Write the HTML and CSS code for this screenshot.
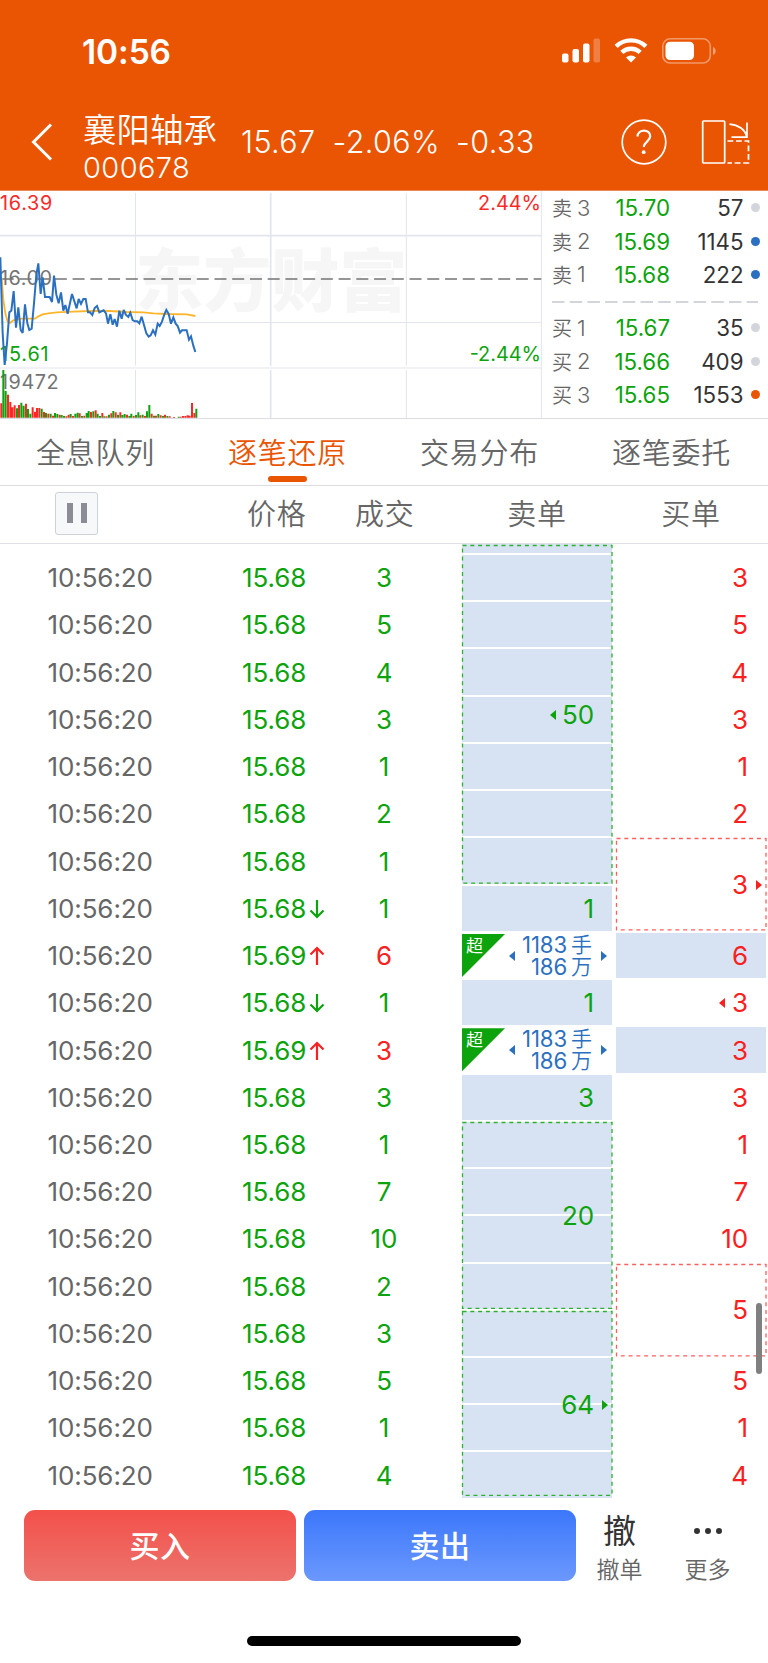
FILE: index.html
```html
<!DOCTYPE html>
<html lang="zh-CN">
<head>
<meta charset="utf-8">
<title>襄阳轴承 000678</title>
<link rel="stylesheet" href="styles.css">
</head>
<body>
<header class="top">
  <div class="status">
    <span class="clock">10:56</span>
    <div class="status-icons">
      <svg width="40" height="26" viewBox="0 0 40 26" fill="#fff"><rect x="1" y="15.5" width="6.5" height="9" rx="2"/><rect x="11.5" y="11" width="6.5" height="13.5" rx="2"/><rect x="22" y="5.5" width="6.5" height="19" rx="2"/><rect x="32.5" y="0.5" width="6.5" height="24" rx="2" opacity=".25"/></svg>
      <svg class="wifi" width="34" height="26" viewBox="0 0 34 26" fill="none" stroke="#fff" stroke-width="4.4"><path d="M2.1 8.4a21.5 21.5 0 0 1 29.8 0"/><path d="M7.8 14.4a13.3 13.3 0 0 1 18.4 0"/><path d="M17 24.6l-5-5.2a7.2 7.2 0 0 1 10 0z" fill="#fff" stroke="none"/></svg>
      <svg class="battery" width="55" height="26" viewBox="0 0 55 26"><rect x=".8" y=".8" width="47.5" height="24.2" rx="7.4" fill="none" stroke="#fff" stroke-opacity=".4" stroke-width="1.6"/><rect x="3.5" y="3.8" width="28.5" height="18.2" rx="4.5" fill="#fff"/><path d="M51 9c3.6 1.500 3.600 6.500 0 8z" fill="#fff" fill-opacity=".45"/></svg>
    </div>
  </div>
  <div class="nav">
    <svg class="back" width="22" height="38" viewBox="0 0 22 38" fill="none" stroke="#fff" stroke-width="3"><path d="M20 1.500L2.500 19 20 36.500"/></svg>
    <div class="stock"><div class="name">襄阳轴承</div><div class="code">000678</div></div>
    <div class="quote"><span class="q1">15.67</span><span class="q2">-2.06%</span><span class="q3">-0.33</span></div>
    <svg class="help" width="46" height="46" viewBox="0 0 46 46" fill="none" stroke="#fff" stroke-width="1.700"><circle cx="23" cy="23" r="21.800"/><path stroke-width="2.200" d="M16.500 17.500c.3-8 12.700-7.800 12.700-.3 0 5.300-6.400 5.500-6.400 10.800"/><circle cx="22.700" cy="33.200" r="1.900" fill="#fff" stroke="none"/></svg>
    <svg class="rotate" width="50" height="46" viewBox="0 0 50 46" fill="none" stroke="#fff" stroke-width="1.700"><rect x="1.700" y="2" width="22" height="42" rx="1"/><path d="M28.500 5.200c9 .8 15.800 5.500 17 12M46 3.500V18.200H30.500"/><path stroke-dasharray="5.800 2.700" d="M26.500 22H47.500V44H26.500"/></svg>
  </div>
</header>

<section class="market">
  <svg class="chart" width="543" height="228" viewBox="0 3 1629 684" fill="none">
    <text class="watermark" x="406" y="348" textLength="816">东方财富</text>
    <g stroke="#e3e5ee">
      <path stroke-width="5" d="M0 137H1624M812 9V527M812 540V684"/>
      <path stroke-width="3" d="M0 397.500H1624M0 534H1624M406.500 9V527M406.500 540V684M1219 9V527M1219 540V684M1624 3V684"/>
    </g>
    <path stroke="#747474" stroke-width="4" stroke-dasharray="36 17.200" d="M5 267H1624"/>
    <text class="t gray" x="0" y="286" textLength="156">16.00</text>
    <text class="t red" x="0" y="60" textLength="157">16.39</text>
    <text class="t green" x="0" y="513" textLength="146">15.61</text>
    <text class="t gray" x="0" y="598" textLength="176">19472</text>
    <text class="t red" x="1623" y="60" text-anchor="end">2.44%</text>
    <text class="t green" x="1623" y="513" text-anchor="end">-2.44%</text>
    <path stroke="#ffb52b" stroke-width="5.500" d="M5 265L10 330 16 370 22 392 30 399 40 391 50 388 65 386 85 386 105 386 115 379 128 373 145 370 170 367 220 365 270 363 330 363 380 366 430 367 460 370 500 372 560 373 586 378"/>
    <path stroke="#2b70c0" stroke-width="6" stroke-linejoin="miter" stroke-miterlimit="3" d="M1 202L8 430 14 525 21 460 28 367 34 362 41 303 48 413 55 352 62 420 68 429 75 343 82 400 88 420 95 416 102 340 109 255 115 220 122 312 128 262 135 321 149 321 156 336 162 257 169 314 176 340 183 307 190 362 196 345 203 371 216 312 230 355 236 327 243 342 250 327 257 327 264 367 270 367 277 375 284 354 291 348 298 367 311 361 318 370 324 401 331 373 338 404 344 387 351 410 358 362 365 386 371 360 378 375 385 381 391 368 398 390 405 394 412 394 418 400 425 380 432 405 439 430 446 440 452 436 459 421 466 434 473 401 479 408 486 395 493 373 499 360 506 372 513 401 520 382 527 401 533 408 540 428 546 421 560 421 567 449 573 439 580 467 586 486"/>
    <path stroke="#ff2626" stroke-width="6" d="M4 683V640M24 683V614M31 683V636M37 683V652M44 683V646M57 683V645M78 683V641M98 683V652M105 683V665M111 683V654M118 683V654M132 683V666M145 683V671M159 683V677M179 683V674M199 683V679M206 683V674M219 683V678M239 683V670M253 683V677M273 683V666M287 683V661M307 683V669M320 683V679M334 683V670M347 683V667M361 683V667M381 683V674M401 683V678M421 683V676M435 683V678M455 683V671M468 683V677M482 683V676M495 683V674M509 683V679M522 683V681M542 683V680M549 683V678M556 683V678M563 683V676M569 683V677M576 683V639M583 683V669"/>
    <path stroke="#0ca30c" stroke-width="6" d="M10 683V540M17 683V603M51 683V655M64 683V638M71 683V647M84 683V657M91 683V671M125 683V656M138 683V669M152 683V671M165 683V669M172 683V672M185 683V675M192 683V678M212 683V672M226 683V671M233 683V668M246 683V678M260 683V669M266 683V663M280 683V664M293 683V671M300 683V678M313 683V679M327 683V674M340 683V663M354 683V674M367 683V675M374 683V672M388 683V678M394 683V671M408 683V675M415 683V667M428 683V674M441 683V664M448 683V645M462 683V677M475 683V672M489 683V678M502 683V678M536 683V680M589 683V656"/>
  </svg>
  <div class="depth">
    <div class="level"><span class="side">卖<i>3</i></span><b>15.70</b><em>57</em><u></u></div>
    <div class="level"><span class="side">卖<i>2</i></span><b>15.69</b><em>1145</em><u class="blue"></u></div>
    <div class="level"><span class="side">卖<i>1</i></span><b>15.68</b><em>222</em><u class="blue"></u></div>
    <svg class="split" width="206" height="20" viewBox="0 0 206 20"><path d="M0 11H206" stroke="#d2d5db" stroke-width="2" stroke-dasharray="12.500 5.200"/></svg>
    <div class="level"><span class="side">买<i>1</i></span><b>15.67</b><em>35</em><u></u></div>
    <div class="level"><span class="side">买<i>2</i></span><b>15.66</b><em>409</em><u></u></div>
    <div class="level"><span class="side">买<i>3</i></span><b>15.65</b><em>1553</em><u class="orange"></u></div>
  </div>
</section>

<nav class="tabs"><span>全息队列</span><span class="active">逐笔还原</span><span>交易分布</span><span>逐笔委托</span></nav>

<div class="cols head">
  <span class="pause"><i></i><i></i></span>
  <span class="h-price">价格</span><span class="h-mid">成交</span><span class="h-mid h-sell">卖单</span><span class="h-mid h-buy">买单</span>
</div>

<main class="cols body">
  <div class="col time"><p>10:56:20</p><p>10:56:20</p><p>10:56:20</p><p>10:56:20</p><p>10:56:20</p><p>10:56:20</p><p>10:56:20</p><p>10:56:20</p><p>10:56:20</p><p>10:56:20</p><p>10:56:20</p><p>10:56:20</p><p>10:56:20</p><p>10:56:20</p><p>10:56:20</p><p>10:56:20</p><p>10:56:20</p><p>10:56:20</p><p>10:56:20</p><p>10:56:20</p></div>
  <div class="col price">
    <p>15.68</p><p>15.68</p><p>15.68</p><p>15.68</p><p>15.68</p><p>15.68</p><p>15.68</p>
    <p>15.68<svg class="arrow" viewBox="0 0 16 20"><path d="M8 1V18M1.500 11.500L8 18l6.500-6.500"/></svg></p>
    <p>15.69<svg class="arrow up" viewBox="0 0 16 20"><path d="M8 19V2M1.500 8.500L8 2l6.500 6.500"/></svg></p>
    <p>15.68<svg class="arrow" viewBox="0 0 16 20"><path d="M8 1V18M1.500 11.500L8 18l6.500-6.500"/></svg></p>
    <p>15.69<svg class="arrow up" viewBox="0 0 16 20"><path d="M8 19V2M1.500 8.500L8 2l6.500 6.500"/></svg></p>
    <p>15.68</p><p>15.68</p><p>15.68</p><p>15.68</p><p>15.68</p><p>15.68</p><p>15.68</p><p>15.68</p><p>15.68</p>
  </div>
  <div class="col vol"><p>3</p><p>5</p><p>4</p><p>3</p><p>1</p><p>2</p><p>1</p><p>1</p><p class="red">6</p><p>1</p><p class="red">3</p><p>3</p><p>1</p><p>7</p><p>10</p><p>2</p><p>3</p><p>5</p><p>1</p><p>4</p></div>
  <div class="col sell">
    <div class="group first"><div class="stub"></div><div class="cell"></div><div class="cell"></div><div class="cell"></div><div class="cell"></div><div class="cell"></div><div class="cell"></div><div class="cell"></div><svg class="dash"><rect/></svg><span class="sum"><svg class="tri" viewBox="0 0 6 10"><path d="M6 0V10L0 5z"/></svg>50</span></div>
    <div class="cell">1</div>
    <div class="cell super"><span class="corner">超</span><svg class="tri" viewBox="0 0 6 10"><path d="M6 0V10L0 5z"/></svg><span class="big"><span>1183<s>手</s></span><span>186<s>万</s></span></span><svg class="tri" viewBox="0 0 6 10"><path d="M0 0V10L6 5z"/></svg></div>
    <div class="cell">1</div>
    <div class="cell super"><span class="corner">超</span><svg class="tri" viewBox="0 0 6 10"><path d="M6 0V10L0 5z"/></svg><span class="big"><span>1183<s>手</s></span><span>186<s>万</s></span></span><svg class="tri" viewBox="0 0 6 10"><path d="M0 0V10L6 5z"/></svg></div>
    <div class="cell">3</div>
    <div class="group"><div class="cell"></div><div class="cell"></div><div class="cell"></div><div class="cell"></div><svg class="dash"><rect/></svg><span class="sum">20</span></div>
    <div class="group"><div class="cell"></div><div class="cell"></div><div class="cell"></div><div class="cell"></div><svg class="dash last"><rect/></svg><span class="sum">64<svg class="tri after" viewBox="0 0 6 10"><path d="M0 0V10L6 5z"/></svg></span></div>
  </div>
  <div class="col buy">
    <p>3</p><p>5</p><p>4</p><p>3</p><p>1</p><p>2</p>
    <div class="group pair"><svg class="dash"><rect/></svg><span class="sum">3<svg class="tri after" viewBox="0 0 6 10"><path d="M0 0V10L6 5z"/></svg></span></div>
    <div class="cell">6</div>
    <p><svg class="tri before" viewBox="0 0 6 10"><path d="M6 0V10L0 5z"/></svg>3</p>
    <div class="cell">3</div>
    <p>3</p><p>1</p><p>7</p><p>10</p>
    <div class="group pair"><svg class="dash"><rect/></svg><span class="sum">5</span></div>
    <p>5</p><p>1</p><p>4</p>
  </div>
  <div class="scrollbar"></div>
</main>

<footer class="actions">
  <div class="btn btn-buy">买入</div>
  <div class="btn btn-sell">卖出</div>
  <div class="act"><span class="act-icon">撤</span><span>撤单</span></div>
  <div class="act more"><span class="act-icon"><svg width="30" height="8" viewBox="0 0 30 8" fill="#333"><circle cx="4" cy="4" r="3"/><circle cx="15" cy="4" r="3"/><circle cx="26" cy="4" r="3"/></svg></span><span>更多</span></div>
</footer>
<div class="home"></div>
</body>
</html>
```
FILE: styles.css
```css
* { box-sizing: border-box; margin: 0; padding: 0; }
body {
  width: 768px;
  height: 1663px;
  overflow: hidden;
  background: #fff;
  color: #666;
  font-family: Inter, "Noto Sans CJK SC", sans-serif;
}
svg { display: block; flex: none; }

/* header */
.top { height: 191px; background: #ea5504; color: #fff; border-bottom: 1px solid #e98a5a; }
.status { height: 96px; padding: 32px 51px 0 82px; display: flex; justify-content: space-between; }
.clock { font-size: 33.5px; line-height: 40px; font-weight: 600; letter-spacing: -.1px; }
.status-icons { display: flex; padding: 6px 0 0; }
.wifi { margin-left: 13px; }
.battery { margin-left: 14px; }
.nav { height: 91px; display: flex; align-items: center; padding: 0 17px 0 31px; }
.stock { width: 158px; margin-left: 30px; }
.name { font-size: 33.5px; line-height: 40px; font-weight: 350; white-space: nowrap; margin-top: 12px; }
.code { font-size: 29px; line-height: 36px; font-weight: 350; letter-spacing: .4px; }
.quote { flex: 1; display: flex; font-size: 30.5px; font-weight: 350; letter-spacing: .4px; }
.q2 { margin-left: 17px; }
.q3 { margin-left: 16px; }
.help { margin-right: 34px; }

/* chart and order book */
.market { height: 228px; display: flex; border-bottom: 1px solid #dcdde4; }
.chart { height: 228px; }
.watermark { font: 900 204px "Noto Sans CJK SC", sans-serif; fill: #f6f6f6; }
.t { font-size: 59.500px; }
.gray { fill: #747474; }
.t.red { fill: #fa2a2a; }
.t.green { fill: #0ca30c; }
.depth { flex: 1; padding: 0 7px 0 9px; }
.level { height: 33.4px; display: grid; grid-template-columns: 50px 68px 73.500px 1fr; align-items: center; font-size: 22.300px; }
.level b, .level em { font-weight: 400; font-style: normal; text-align: right; color: #0ca30c; }
.level em { color: #333; }
.side { display: flex; gap: 5px; align-items: center; font-size: 20px; font-weight: 350; }
.side i { font-style: normal; font-size: 22px; }
.level u { width: 9px; height: 9px; border-radius: 50%; background: #d2d5db; justify-self: center; margin-left: 7px; }
.level u.blue { background: #2b70c0; }
.level u.orange { background: #ea5504; }

/* tabs */
.tabs { height: 67px; display: grid; grid-template-columns: repeat(4, 1fr); border-bottom: 1px solid #dcdde4; font-size: 29px; font-weight: 350; letter-spacing: .8px; }
.tabs span { position: relative; display: flex; justify-content: center; line-height: 70px; padding-right: 1px; }
.tabs .active { color: #ea5504; }
.active::after { content: ""; position: absolute; top: 57px; width: 39px; height: 6px; border-radius: 3px; background: #ea5504; }

/* trade list */
.cols { display: grid; grid-template-columns: 243px 112px 58px 49px 150px 4px 150px; }
.head { height: 58px; align-items: center; border-bottom: 1.500px solid #dfe0e8; padding-bottom: 1px; font-size: 29px; line-height: 42px; font-weight: 350; letter-spacing: .8px; white-space: nowrap; }
.pause { width: 43px; height: 43px; margin: -2px 0 0 55px; border: 1px solid #cdd2da; border-radius: 3px; background: #f6f8fa; display: flex; justify-content: center; align-items: center; gap: 8px; }
.pause i { width: 6px; height: 20px; background: #8c8c94; }
.h-price, .h-mid { padding-top: 1px; }
.h-price { padding-left: 4px; }
.h-mid { text-align: center; }
.h-sell { grid-column: 5; }
.h-buy { grid-column: 7; }
.body { position: relative; height: 955px; font-size: 26px; line-height: 1; letter-spacing: -.1px; }
.col { padding-top: 10px; color: #0ca30c; }
.col p { height: 47.240px; display: flex; align-items: center; position: relative; padding-top: 1.200px; }
.time { color: #666; padding-left: 47.500px; }
.price { margin-left: -1px; }
.vol p { justify-content: center; }
.col .red, .buy { color: #fa2020; }
.arrow { width: 16px; height: 20px; margin-left: 2.500px; fill: none; stroke: #0ca30c; stroke-width: 2.200; }
.arrow.up { stroke: #fa2020; }
.sell { grid-column: 5; }
.buy { grid-column: 7; }
.buy p { justify-content: flex-end; padding-right: 18px; }
.cell { height: 47.240px; display: flex; align-items: center; justify-content: flex-end; padding-top: 1.200px; padding-right: 18px; background: #d7e3f3; border: solid #fff; border-width: 1.300px 0; background-clip: padding-box; }
.group { position: relative; }
.first { margin-top: -10px; }
.stub { height: 10px; background: #d7e3f3; border-bottom: 1px solid #fff; }
.pair { height: 94.480px; }
.dash { position: absolute; left: 0; top: 1px; width: 100%; height: calc(100% - 2px); overflow: visible; }
.dash.last { height: calc(100% - 4px); }
.dash rect { x: .5px; y: .5px; width: calc(100% - .5px); height: calc(100% - 1px); fill: none; stroke: #2fb12f; stroke-width: 1.300; stroke-dasharray: 4 3.800; }
.buy .dash rect { stroke: #fb6060; }
.sum { position: absolute; inset: 1px 18px 0 0; display: flex; align-items: center; justify-content: flex-end; }
.tri { width: 6px; height: 10px; fill: currentColor; }
.sum .tri { margin-right: 6px; }
.sum .after { position: absolute; right: -13.500px; margin: 0; }
.before { margin-right: 7px; }
.super { background: #fff; color: #2b70c0; padding-right: 5px; padding-top: 1px; position: relative; }
.corner { position: absolute; left: 0; top: 1px; width: 43px; height: 43px; background: #0ca30c; clip-path: polygon(0 0, 100% 0, 0 100%); color: #fff; font-size: 17px; line-height: 24px; padding-left: 4px; }
.big { display: flex; flex-direction: column; align-items: flex-end; margin: 0 9px 0 7px; font-size: 22.200px; line-height: 22px; }
.big span { display: flex; align-items: center; }
.big s { text-decoration: none; font-size: 21px; font-weight: 350; margin-left: 4px; }
.scrollbar { position: absolute; left: 756px; top: 759px; width: 6px; height: 71px; border-radius: 3px; background: #808080; }

/* bottom bar */
.actions { height: 137px; padding: 11px 0 0 24px; display: flex; }
.btn { width: 272px; height: 71px; margin-right: 8px; padding-bottom: 4px; border-radius: 11px; color: #fff; font-size: 30px; font-weight: 500; letter-spacing: .5px; display: flex; align-items: center; justify-content: center; }
.btn-buy { background: linear-gradient(#f4504a, #ec736d); }
.btn-sell { background: linear-gradient(#3c77fb, #6b98fd); }
.act { width: 71px; display: flex; flex-direction: column; align-items: center; font-size: 23px; font-weight: 350; line-height: 38px; padding-top: 1px; }
.act-icon { height: 40px; display: flex; align-items: center; font-size: 33px; font-weight: 400; color: #333; }
.more { margin-left: 17px; }
.home { width: 274px; height: 10px; margin-left: 247px; border-radius: 5px; background: #000; }
```
